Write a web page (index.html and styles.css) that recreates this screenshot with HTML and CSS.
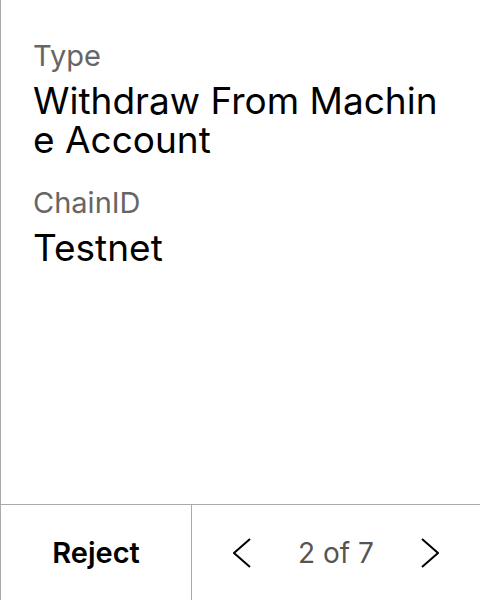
FILE: index.html
```html
<!DOCTYPE html>
<html>
<head>
<meta charset="utf-8">
<link rel="stylesheet" href="styles.css">
</head>
<body>
<div class="screen">
  <div class="content">
    <div class="field">
      <div class="label">Type</div>
      <div class="value">Withdraw From Machine Account</div>
    </div>
    <div class="field">
      <div class="label">ChainID</div>
      <div class="value">Testnet</div>
    </div>
  </div>
  <div class="footer">
    <div class="reject">Reject</div>
    <div class="pager">
      <svg class="chev" width="18" height="30" viewBox="0 0 18 30"><path d="M17 1 L1 15 L17 29" fill="none" stroke="#000" stroke-width="2"/></svg>
      <span class="count">2 of 7</span>
      <svg class="chev" width="18" height="30" viewBox="0 0 18 30"><path d="M1 1 L17 15 L1 29" fill="none" stroke="#000" stroke-width="2"/></svg>
    </div>
  </div>
</div>
</body>
</html>
```
FILE: styles.css
```css
* { box-sizing: border-box; }
html, body { margin: 0; padding: 0; background: #fff; }
body { font-family: Inter, "Noto Sans", sans-serif; color: #000; }
.screen {
  width: 480px;
  height: 600px;
  border-left: 1px solid #aaaaaa;
  display: flex;
  flex-direction: column;
}
.content {
  flex: 1;
  padding: 39px 28px 0 32px;
  display: flex;
  flex-direction: column;
  gap: 27px;
}
.label {
  font-size: 29px;
  line-height: 1.2;
  color: #666;
  margin-bottom: 7px;
}
.value {
  font-size: 37px;
  font-weight: 400;
  line-height: 39px;
  word-break: break-all;
}
.footer {
  height: 96px;
  border-top: 1px solid #aaaaaa;
  display: flex;
}
.reject {
  width: 191px;
  border-right: 1px solid #aaaaaa;
  display: flex;
  align-items: center;
  justify-content: center;
  font-size: 29px;
  font-weight: 600;
}
.pager {
  flex: 1;
  display: flex;
  align-items: center;
  justify-content: space-between;
  padding: 0 41px;
}
.chev { display: block; }
.count {
  font-size: 28px;
  color: #555;
}
```
